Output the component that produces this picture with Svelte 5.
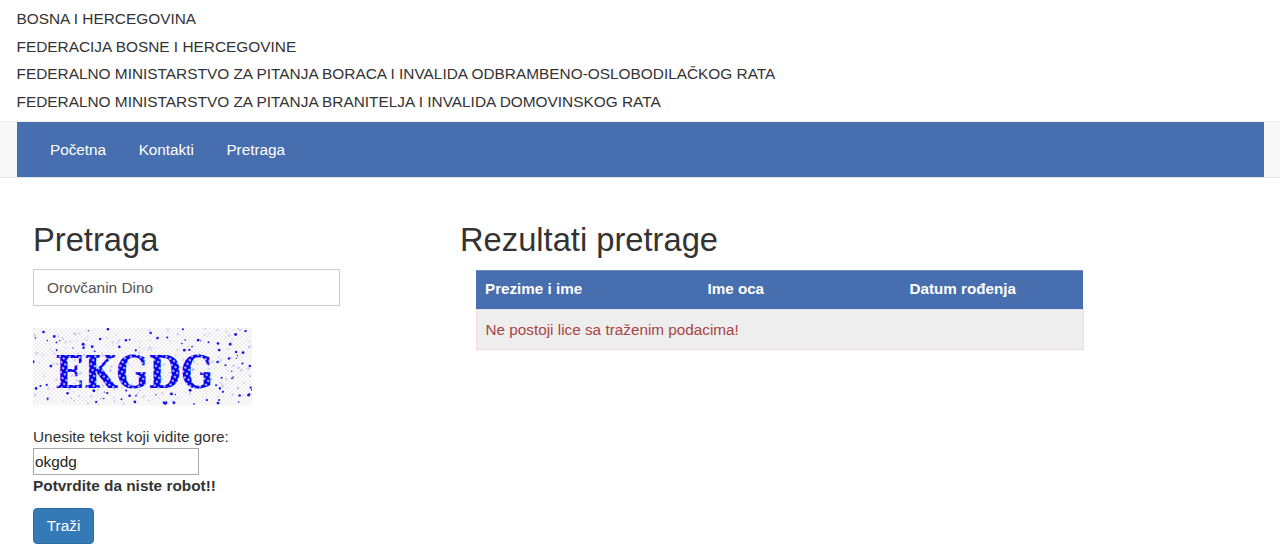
<script>
  const titles = [
    'BOSNA I HERCEGOVINA',
    'FEDERACIJA BOSNE I HERCEGOVINE',
    'FEDERALNO MINISTARSTVO ZA PITANJA BORACA I INVALIDA ODBRAMBENO-OSLOBODILAČKOG RATA',
    'FEDERALNO MINISTARSTVO ZA PITANJA BRANITELJA I INVALIDA DOMOVINSKOG RATA'
  ];
  const links = ['Početna', 'Kontakti', 'Pretraga'];
  let seed = 11;
  const rnd = () => (seed = (seed * 16807) % 2147483647) / 2147483647;
  const dots = Array.from({ length: 360 }, () => ({
    x: rnd() * 219,
    y: rnd() * 77,
    r: 0.6 + rnd() * 0.9,
    o: rnd() < 0.38 ? 0.95 : 0.16
  })).filter((d) => d.y < 24 || d.y > 62 || d.x < 20 || d.x > 182 || d.o < 0.5);
</script>

<div class="page">
  <header class="titles">
    {#each titles as t}<p>{t}</p>{/each}
  </header>

  <nav class="navbar">
    <ul class="nav">
      {#each links as l}<li>{l}</li>{/each}
    </ul>
  </nav>

  <main class="content">
    <section class="search">
      <h2>Pretraga</h2>
      <input class="name" type="text" value="Orovčanin Dino" />
      <svg class="captcha" viewBox="0 0 219 77" width="219" height="77" role="img" aria-label="captcha">
        <defs>
          <pattern id="bg" width="4" height="4" patternUnits="userSpaceOnUse">
            <rect width="4" height="4" fill="#fdfdfd" />
            <rect width="2" height="2" fill="#eeeef1" />
            <rect x="2" y="2" width="2" height="2" fill="#f1edf0" />
          </pattern>
          <pattern id="ink" width="4.4" height="4.4" patternUnits="userSpaceOnUse" patternTransform="rotate(30)">
            <rect width="4.4" height="4.4" fill="#0000ee" />
            <circle cx="2.2" cy="2.2" r="1.15" fill="#d0d0ff" />
          </pattern>
        </defs>
        <rect width="219" height="77" fill="url(#bg)" />
        {#each dots as d}
          <circle cx={d.x} cy={d.y} r={d.r} fill="#0a0af0" opacity={d.o} />
        {/each}
        <text class="cap-text" x="22" y="60" textLength="158" lengthAdjust="spacingAndGlyphs" fill="url(#ink)">EKGDG</text>
      </svg>
      <label class="cap-label" for="cap">Unesite tekst koji vidite gore:</label>
      <input id="cap" class="cap" type="text" value="okgdg" />
      <strong class="warn">Potvrdite da niste robot!!</strong>
      <button class="btn">Traži</button>
    </section>

    <section class="results">
      <h2>Rezultati pretrage</h2>
      <table>
        <thead>
          <tr><th class="c1">Prezime i ime</th><th class="c2">Ime oca</th><th>Datum rođenja</th></tr>
        </thead>
        <tbody>
          <tr><td colspan="3">Ne postoji lice sa traženim podacima!</td></tr>
        </tbody>
      </table>
    </section>
  </main>
</div>

<style>
  :global(body) {
    margin: 0;
    background: #fff;
  }
  .page {
    font-family: "Liberation Sans", Arial, sans-serif;
    font-size: 15.4px;
    line-height: 20px;
    color: #333;
  }
  .titles {
    padding: 5px 16px 5px 16.5px;
  }
  .titles p {
    margin: 0;
    line-height: 27.7px;
  }
  .navbar {
    height: 55px;
    padding: 0 16px 0 17px;
    background: #f8f8f8;
    border-top: 1px solid #eee;
    border-bottom: 1px solid #e7e7e7;
  }
  .nav {
    display: flex;
    box-sizing: border-box;
    height: 100%;
    margin: 0;
    padding: 2px 0 0 33px;
    list-style: none;
    background: #476eae;
    color: #fff;
    font-size: 15.3px;
    align-items: center;
    gap: 32.5px;
  }
  .content {
    display: flex;
    padding: 40px 33px 0;
  }
  .search {
    width: 427px;
    flex: none;
    display: flex;
    flex-direction: column;
    align-items: flex-start;
  }
  h2 {
    margin: 0;
    font-size: 32.7px;
    font-weight: 500;
    line-height: 44px;
    color: #333;
  }
  .name {
    box-sizing: border-box;
    width: 307px;
    height: 37px;
    margin-top: 7px;
    padding: 7px 13px 5px;
    border: 1px solid #ccc;
    font: 15.4px/20px "Liberation Sans", Arial, sans-serif;
    color: #555;
    outline: none;
  }
  .captcha {
    display: block;
    margin-top: 22px;
  }
  .cap-text {
    font-family: "DejaVu Serif", "Liberation Serif", serif;
    font-weight: 700;
    font-size: 45px;
  }
  .cap-label {
    margin-top: 22px;
    margin-bottom: 1px;
  }
  .cap {
    box-sizing: border-box;
    width: 166px;
    height: 27px;
    padding: 2px 1px 0;
    border: 1px solid #a9a9a9;
    font: 15.4px/20px "Liberation Sans", Arial, sans-serif;
    color: #222;
    outline: none;
  }
  .warn {
    margin-top: 1px;
    font-weight: 700;
  }
  .btn {
    box-sizing: border-box;
    width: 61px;
    height: 36px;
    margin-top: 12px;
    padding: 0;
    border: 1px solid #2e6da4;
    border-radius: 4px;
    background: #337ab7;
    color: #fff;
    font: 15.4px/20px "Liberation Sans", Arial, sans-serif;
  }
  .results {
    flex: none;
    width: 640px;
  }
  table {
    box-sizing: border-box;
    width: 608px;
    margin: 8px 0 0 15.5px;
    border-collapse: collapse;
    table-layout: fixed;
  }
  th {
    height: 37px;
    padding: 0 8px 1px 9px;
    background: #476eae;
    color: #fff;
    font-size: 15.2px;
    font-weight: 700;
    text-align: left;
    border-top: 1px solid #6f8fc2;
    border-bottom: 1px solid #dde3ee;
  }
  .c1 { width: 205.5px; }
  .c2 { width: 185px; }
  td {
    height: 38px;
    padding: 1px 9px 0;
    background: #eee;
    color: #a94442;
    font-size: 15.3px;
    border: 1px solid #f0d8dd;
    border-top: none;
  }
</style>
